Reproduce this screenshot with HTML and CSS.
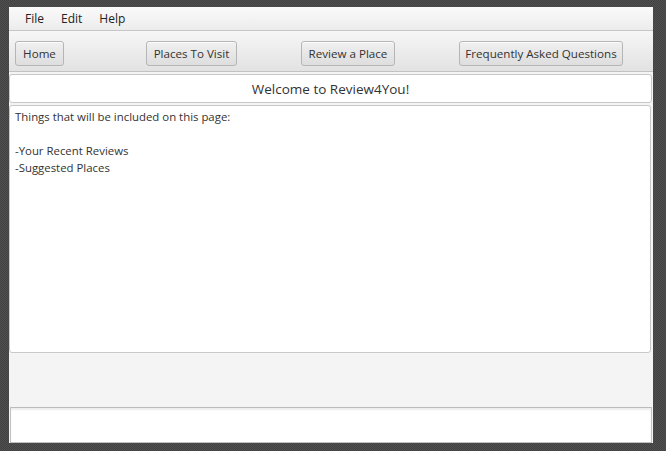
FILE: index.html
```html
<!DOCTYPE html>
<html>
<head>
<meta charset="utf-8">
<link rel="stylesheet" href="styles.css">
</head>
<body>
<div class="app">
  <div class="menubar">
    <span class="menu">File</span>
    <span class="menu">Edit</span>
    <span class="menu">Help</span>
  </div>
  <div class="toolbar">
    <button class="btn b-home">Home</button>
    <button class="btn b-places">Places To Visit</button>
    <button class="btn b-review">Review a Place</button>
    <button class="btn b-faq">Frequently Asked Questions</button>
  </div>
  <div class="welcome">Welcome to Review4You!</div>
  <div class="textarea">
    <div class="line">Things that will be included on this page:</div>
    <div class="line">&nbsp;</div>
    <div class="line">-Your Recent Reviews</div>
    <div class="line">-Suggested Places</div>
  </div>
  <div class="spacer"></div>
  <div class="footer"></div>
</div>
</body>
</html>
```
FILE: styles.css
```css
html, body {
  margin: 0;
  padding: 0;
  height: 100%;
}
body {
  background-color: #474747;
  background-image: repeating-conic-gradient(#4f4f4f 0 25%, #424242 0 50%);
  background-size: 2px 2px;
  font-family: "Open Sans", "Noto Sans", sans-serif;
  font-size: 11.4px;
  color: #333;
}
.app {
  margin: 7px 0 0 9px;
  width: 644px;
  height: 436px;
  background: #f4f4f4;
  display: flex;
  flex-direction: column;
}
.menubar {
  height: 23px;
  border-bottom: 1px solid #c6c6c6;
  background: linear-gradient(#fafafa, #ececec);
  display: flex;
  align-items: center;
  padding-left: 16px;
  font-size: 12px;
}
.menu {
  color: #222;
  margin-right: 17px;
}
.toolbar {
  border-bottom: 1px solid #c2c2c2;
  background: linear-gradient(#f6f6f6, #e2e2e2);
  display: flex;
  align-items: flex-start;
  padding: 10px 0 0 6px;
  box-sizing: border-box;
  height: 41px;
}
.btn {
  height: 25px;
  padding: 0;
  font-family: inherit;
  font-size: 11.6px;
  color: #333;
  border: 1px solid #b5b5b5;
  border-radius: 3px;
  background: linear-gradient(#f0f0f0, #dedede);
  box-shadow: inset 0 1px 0 #fdfdfd;
  text-align: center;
}
.b-home { width: 49px; }
.b-places { width: 91px; margin-left: 82px; }
.b-review { width: 94px; margin-left: 64px; }
.b-faq { width: 164px; margin-left: 64px; }
.welcome {
  margin-top: 2px;
  height: 27px;
  background: #fff;
  border: 1px solid #c8c8c8;
  border-radius: 3px;
  width: 641px;
  display: flex;
  align-items: center;
  justify-content: center;
  font-size: 13.5px;
  color: #333;
}
.textarea {
  margin-top: 2px;
  width: 642px;
  background: #fff;
  border: 1px solid #c8c8c8;
  border-radius: 3px;
  padding: 2px 0 0 5px;
  box-sizing: border-box;
  height: 248px;
}
.line {
  line-height: 17px;
}
.spacer {
  height: 54px;
}
.footer {
  flex: 1;
  background: #fff;
  border: 1px solid #c2c2c2;
  border-top-color: #bbb;
  box-shadow: inset 0 2px 2px #eee;
  margin-left: 1px;
  margin-right: 1px;
}
```
